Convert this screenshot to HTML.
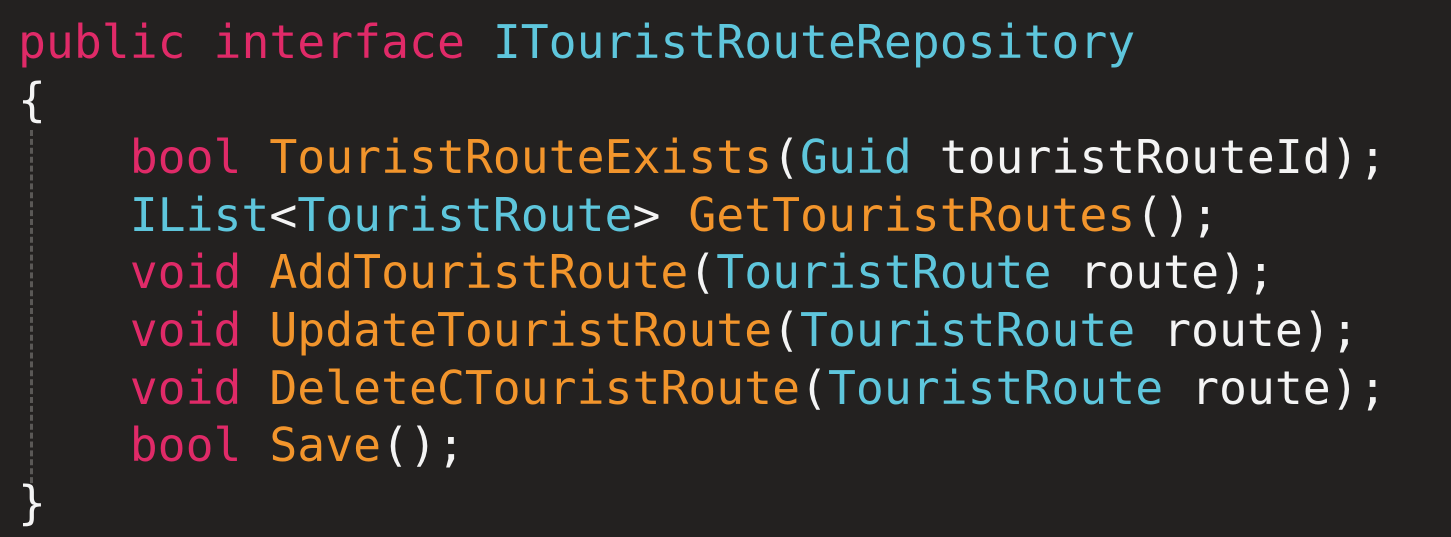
<!DOCTYPE html>
<html><head><style>
html,body{margin:0;padding:0;width:1451px;height:537px;background:#232120;overflow:hidden}
pre{margin:0;position:absolute;left:18px;top:14px;font-family:"DejaVu Sans Mono","Liberation Mono",monospace;font-size:46.4px;line-height:57.6px;color:#f4f4f4;letter-spacing:0}
.k{color:#e02a68}.t{color:#5ec6dc}.f{color:#f2952c}
.g{position:absolute;left:30px;top:130px;width:0;height:362px;border-left:3px dashed #5a5856}
</style></head><body>
<div class="g"></div>
<pre><span class="k">public</span> <span class="k">interface</span> <span class="t">ITouristRouteRepository</span>
{
    <span class="k">bool</span> <span class="f">TouristRouteExists</span>(<span class="t">Guid</span> touristRouteId);
    <span class="t">IList</span>&lt;<span class="t">TouristRoute</span>&gt; <span class="f">GetTouristRoutes</span>();
    <span class="k">void</span> <span class="f">AddTouristRoute</span>(<span class="t">TouristRoute</span> route);
    <span class="k">void</span> <span class="f">UpdateTouristRoute</span>(<span class="t">TouristRoute</span> route);
    <span class="k">void</span> <span class="f">DeleteCTouristRoute</span>(<span class="t">TouristRoute</span> route);
    <span class="k">bool</span> <span class="f">Save</span>();
}</pre>
</body></html>
